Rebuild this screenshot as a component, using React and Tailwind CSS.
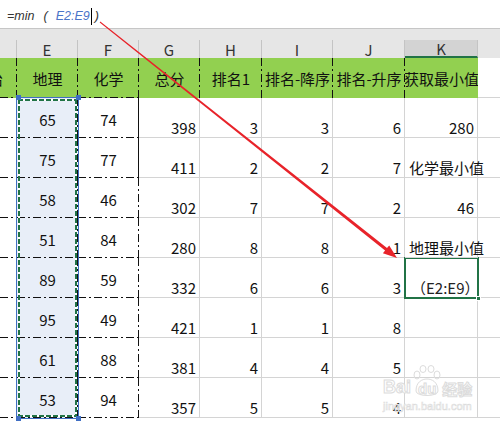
import React from "react";

const COLS = "grid grid-cols-[17px_61px_61px_61px_62px_71px_72px_73px_22px]";

// dash-dot lines (right + bottom) like the Excel border style
const DD =
  "bg-[image:repeating-linear-gradient(to_bottom,#111_0px_8px,transparent_8px_11px,#111_11px_13px,transparent_13px_16px),repeating-linear-gradient(to_right,#111_0px_8px,transparent_8px_11px,#111_11px_13px,transparent_13px_16px)] bg-[length:1px_100%,100%_1px] bg-[position:right_top,left_bottom] bg-no-repeat";
const DD_SOLID_R =
  "bg-[image:linear-gradient(#111,#111),repeating-linear-gradient(to_right,#111_0px_8px,transparent_8px_11px,#111_11px_13px,transparent_13px_16px)] bg-[length:1px_100%,100%_1px] bg-[position:right_top,left_bottom] bg-no-repeat";
const DD_R =
  "bg-[image:repeating-linear-gradient(to_bottom,#111_0px_8px,transparent_8px_11px,#111_11px_13px,transparent_13px_16px)] bg-[length:1px_100%] bg-[position:right_top] bg-no-repeat";
const GRID = "border-r border-b border-[#d4d4d4]";
const ANTS =
  "bg-[image:repeating-linear-gradient(to_right,#217346_0px_5px,#fff_5px_7px),repeating-linear-gradient(to_right,#217346_0px_5px,#fff_5px_7px),repeating-linear-gradient(to_bottom,#217346_0px_5px,#fff_5px_7px),repeating-linear-gradient(to_bottom,#217346_0px_5px,#fff_5px_7px)] bg-[length:100%_2px,100%_2px,2px_100%,2px_100%] bg-[position:left_top,left_bottom,left_top,right_top] bg-no-repeat";

const rows = [
  { e: 65, f: 74, g: 398, h: 3, i: 3, j: 6, k: "280", kAlign: "right" },
  { e: 75, f: 77, g: 411, h: 2, i: 2, j: 7, k: "化学最小值", kAlign: "left" },
  { e: 58, f: 46, g: 302, h: 7, i: 7, j: 2, k: "46", kAlign: "right" },
  { e: 51, f: 84, g: 280, h: 8, i: 8, j: 1, k: "地理最小值", kAlign: "left" },
  { e: 89, f: 59, g: 332, h: 6, i: 6, j: 3, k: "（E2:E9）", kAlign: "formula" },
  { e: 95, f: 49, g: 421, h: 1, i: 1, j: 8, k: "", kAlign: "right" },
  { e: 61, f: 88, g: 381, h: 4, i: 4, j: 5, k: "", kAlign: "right" },
  { e: 53, f: 94, g: 357, h: 5, i: 5, j: 4, k: "", kAlign: "right" },
];

const letters = ["", "E", "F", "G", "H", "I", "J", "K", ""];

const NumCell = ({ value }) => (
  <div className={`${GRID} flex items-end justify-end pr-[3px] pb-[2px] leading-none`}>
    {value}
  </div>
);

const App = () => {
  return (
    <div className="relative w-[500px] h-[421px] overflow-hidden bg-white text-[#111] font-['Noto_Sans_CJK_SC','Noto_Sans',sans-serif]">
      {/* formula bar */}
      <div className="h-[29px] border-b border-[#c6c6c6] flex items-center pl-[7px] pt-[4px] italic text-[12.5px] text-[#333] leading-none font-['Liberation_Sans',sans-serif]">
        <span>=min</span>
        <span className="ml-[9px]">(</span>
        <span className="text-[#4a74c8] ml-[8px]">E2:E9</span>
        <span className="inline-block w-[1px] h-[17px] bg-black ml-[1px]"></span>
        <span className="ml-[3px]">)</span>
      </div>
      <div className="h-[11px] bg-[#e6e6e6]"></div>

      {/* column letters */}
      <div className={`${COLS} h-[18px] bg-[#e6e6e6] text-[15px] leading-none text-[#333]`}>
        {letters.map((l, i) => (
          <div
            key={i}
            className={`flex items-center justify-center border-r border-[#c4c4c4] ${
              i === 7 ? "bg-[#d3d3d3] border-b-2 border-b-[#217346]" : ""
            } ${i === 8 ? "border-r-0" : ""}`}
          >
            {l}
          </div>
        ))}
      </div>

      {/* green header row */}
      <div className={`${COLS} h-[40px] text-[15px] leading-none`}>
        <div className={`${DD} bg-[#92d050] overflow-hidden flex items-center justify-end pr-[14px]`}>
          <span className="shrink-0">治</span>
        </div>
        <div className={`${DD} bg-[#92d050] flex items-center justify-center`}>地理</div>
        <div className={`${DD} bg-[#92d050] flex items-center justify-center`}>化学</div>
        <div className={`${DD_R} bg-[#92d050] flex items-center justify-center`}>总分</div>
        <div className={`${DD_R} bg-[#92d050] flex items-center justify-center`}>排名1</div>
        <div className={`${DD_R} bg-[#92d050] flex items-center justify-center whitespace-nowrap overflow-hidden`}>排名-降序</div>
        <div className={`${DD_R} bg-[#92d050] flex items-center justify-center whitespace-nowrap overflow-hidden`}>排名-升序</div>
        <div className="bg-[#92d050] flex items-center justify-center whitespace-nowrap overflow-hidden">获取最小值</div>
        <div className="border-b border-[#d4d4d4]"></div>
      </div>

      {/* data rows */}
      {rows.map((r, idx) => (
        <div key={idx} className={`${COLS} h-[40px] text-[15px] leading-none`}>
          <div className={DD}></div>
          <div className={`${DD} bg-[#e8eef8] flex items-center justify-center pt-[3px]`}>{r.e}</div>
          <div className={`${idx < 2 ? DD_SOLID_R : DD} flex items-center justify-center pt-[3px]`}>{r.f}</div>
          <NumCell value={r.g} />
          <NumCell value={r.h} />
          <NumCell value={r.i} />
          <NumCell value={r.j} />
          {r.kAlign === "left" ? (
            <div className={`${GRID} flex items-end pl-[4px] pb-[2px] whitespace-nowrap relative z-10`}>
              {r.k}
            </div>
          ) : r.kAlign === "formula" ? (
            <div className={`${GRID} flex items-end pl-[4px] pb-[2px] whitespace-nowrap text-[#222]`}>
              <span className="inline-block w-[1px] h-[8px] bg-[#8fe3ea] mb-[3px]"></span>
              <span className="ml-[2px]">{r.k}</span>
            </div>
          ) : (
            <div className={`${GRID} flex items-end justify-end pr-[3px] pb-[2px]`}>{r.k}</div>
          )}
          <div className="border-b border-[#d4d4d4]"></div>
        </div>
      ))}

      {/* selection on column E */}
      <div className="absolute left-[16px] top-[97px] w-[63px] h-[322px] border border-[#3f6ec3] pointer-events-none">
        <div className={`absolute inset-[1px] ${ANTS}`}></div>
      </div>
      <div className="absolute left-[16px] top-[95px] w-[5px] h-[5px] bg-[#3f6ec3]"></div>
      <div className="absolute left-[76px] top-[95px] w-[5px] h-[5px] bg-[#3f6ec3]"></div>
      <div className="absolute left-[16px] top-[416px] w-[5px] h-[5px] bg-[#3f6ec3]"></div>
      <div className="absolute left-[76px] top-[416px] w-[5px] h-[5px] bg-[#3f6ec3]"></div>

      {/* active cell K6 */}
      <div className="absolute left-[404px] top-[257px] w-[75px] h-[42px] border-2 border-[#217346] pointer-events-none"></div>
      <div className="absolute left-[476px] top-[296px] w-[5px] h-[5px] bg-[#217346] border border-white"></div>

      {/* watermark */}
      <div className="absolute left-[383px] top-[378px] pointer-events-none text-white [-webkit-text-stroke:1px_#dcdcdc] font-['Liberation_Sans',sans-serif] font-bold">
        <div className="flex items-end leading-none">
          <span className="text-[18px]">Bai</span>
          <span className="relative ml-[7px] text-[15px]">
            <svg width="28" height="32" viewBox="0 0 28 32" className="absolute -top-[16px] -left-[5px]">
              <g fill="none" stroke="#dcdcdc" strokeWidth="1">
                <ellipse cx="4" cy="10" rx="3" ry="4" />
                <ellipse cx="10" cy="4" rx="3" ry="3.5" />
                <ellipse cx="18" cy="4" rx="3" ry="3.5" />
                <ellipse cx="24" cy="10" rx="3" ry="4" />
                <path d="M3 26 C3 17 9 14 14 14 C19 14 25 17 25 26 C25 32 3 32 3 26 Z" />
              </g>
            </svg>
            <span className="relative">du</span>
          </span>
          <span className="ml-[6px] text-[15px] font-['Noto_Sans_CJK_SC',sans-serif]">经验</span>
        </div>
        <div className="mt-[5px] text-[11px] leading-none font-normal [-webkit-text-stroke:0.6px_#dcdcdc]">jingyan.baidu.com</div>
      </div>

      {/* red arrow */}
      <svg className="absolute left-0 top-0 pointer-events-none" width="500" height="421" viewBox="0 0 500 421">
        <polygon
          fill="#e8232a"
          points="100.3,21.6 387,248.1 389.2,245.4 397,258 382.9,253.2 385.1,250.5 99.7,22.4"
        />
      </svg>
    </div>
  );
};

export default App;
